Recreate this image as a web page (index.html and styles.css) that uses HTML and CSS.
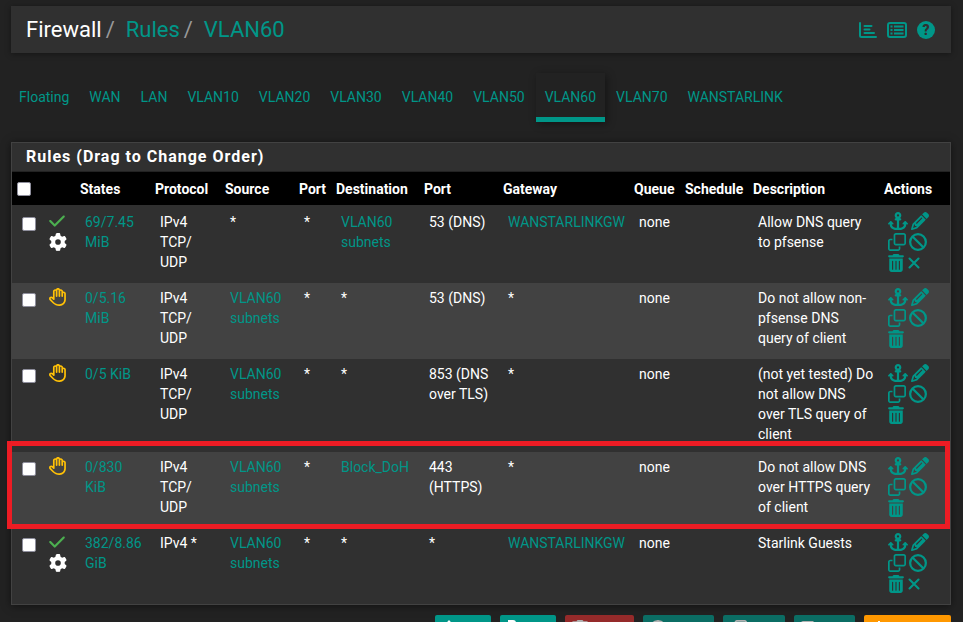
FILE: index.html
```html
<!DOCTYPE html>
<html lang="en">
<head>
    <meta charset="UTF-8">
    <meta name="viewport" content="width=device-width, initial-scale=1.0">
    <title>Firewall: Rules: VLAN60</title>
    <link rel="stylesheet" href="styles.css">
</head>
<body>
    <!-- icon set -->
    <svg class="sprite" aria-hidden="true">
        <symbol id="check" viewBox="0 0 448 512"><path d="M438.6 105.4c12.5 12.5 12.5 32.8 0 45.3l-256 256c-12.5 12.5-32.8 12.5-45.3 0l-128-128c-12.5-12.5-12.5-32.8 0-45.3s32.8-12.5 45.3 0L160 338.7 393.4 105.4c12.5-12.5 32.8-12.5 45.3 0z"/></symbol>
        <symbol id="gear" viewBox="0 0 512 512"><path d="M495.9 166.6c3.2 8.7 .5 18.4-6.4 24.6l-43.3 39.4c1.1 8.3 1.7 16.8 1.7 25.4s-.6 17.1-1.7 25.4l43.3 39.4c6.9 6.2 9.6 15.9 6.4 24.6c-4.4 11.9-9.7 23.3-15.8 34.3l-4.7 8.1c-6.6 11-14 21.4-22.1 31.2c-5.9 7.2-15.7 9.6-24.5 6.8l-55.7-17.7c-13.4 10.3-28.2 18.9-44 25.4l-12.5 57.1c-2 9.1-9 16.3-18.2 17.8c-13.8 2.3-28 3.5-42.5 3.5s-28.7-1.2-42.5-3.5c-9.2-1.5-16.2-8.7-18.2-17.8l-12.5-57.1c-15.8-6.5-30.6-15.1-44-25.4L83.1 425.9c-8.8 2.8-18.6 .3-24.5-6.8c-8.1-9.8-15.5-20.2-22.1-31.2l-4.7-8.1c-6.1-11-11.4-22.4-15.8-34.3c-3.2-8.7-.5-18.4 6.4-24.6l43.3-39.4C64.6 273.1 64 264.6 64 256s.6-17.1 1.7-25.4L22.4 191.2c-6.9-6.2-9.6-15.9-6.4-24.6c4.4-11.9 9.7-23.3 15.8-34.3l4.7-8.1c6.6-11 14-21.4 22.1-31.2c5.9-7.2 15.7-9.6 24.5-6.8l55.7 17.7c13.4-10.3 28.2-18.9 44-25.4l12.5-57.1c2-9.1 9-16.3 18.2-17.8C227.3 1.2 241.5 0 256 0s28.7 1.2 42.5 3.5c9.2 1.5 16.2 8.7 18.2 17.8l12.5 57.1c15.8 6.5 30.6 15.1 44 25.4l55.7-17.7c8.8-2.8 18.6-.3 24.5 6.8c8.1 9.8 15.5 20.2 22.1 31.2l4.7 8.1c6.1 11 11.4 22.4 15.8 34.3zM256 336a80 80 0 1 0 0-160 80 80 0 1 0 0 160z"/></symbol>
        <symbol id="hand" viewBox="0 0 512 512"><path d="M256 0c-25.3 0-47.2 14.7-57.6 36c-7-2.6-14.5-4-22.4-4c-35.3 0-64 28.7-64 64V261.5l-2.7-2.7c-25-25-65.5-25-90.5 0s-25 65.5 0 90.5L106.5 437c48 48 113.1 75 181 75H296h8c1.5 0 3-.1 4.5-.4c91.7-6.2 165-79.4 171.1-171.1c.3-1.5 .4-3 .4-4.5V160c0-35.3-28.7-64-64-64c-5.5 0-10.9 .7-16 2V96c0-35.3-28.7-64-64-64c-7.9 0-15.4 1.4-22.4 4C303.2 14.7 281.3 0 256 0zM240 96.1c0 0 0-.1 0-.1V64c0-8.8 7.2-16 16-16s16 7.2 16 16V95.9c0 0 0 .1 0 .1V232c0 13.3 10.7 24 24 24s24-10.7 24-24V96c0 0 0 0 0-.1c0-8.8 7.2-16 16-16s16 7.2 16 16v55.9c0 0 0 .1 0 .1v80c0 13.3 10.7 24 24 24s24-10.7 24-24V160.1c0 0 0-.1 0-.1c0-8.8 7.2-16 16-16s16 7.2 16 16V332.9c-.1 .6-.1 1.3-.2 1.9c-3.4 69.7-59.3 125.6-129 129c-.6 0-1.3 .1-1.9 .2H296h-8.5c-55.2 0-108.1-21.9-147.1-60.9L52.7 315.3c-6.2-6.2-6.2-16.4 0-22.6s16.4-6.2 22.6 0L119 336.4c6.9 6.9 17.2 8.9 26.2 5.2s14.8-12.5 14.8-22.2V96c0-8.8 7.2-16 16-16c8.8 0 16 7.1 16 15.9V232c0 13.3 10.7 24 24 24s24-10.7 24-24V96.1z"/></symbol>
        <symbol id="anchor" viewBox="0 0 576 512"><path d="M320 96a32 32 0 1 1 -64 0 32 32 0 1 1 64 0zm21.1 80C367 158.8 384 129.4 384 96c0-53-43-96-96-96s-96 43-96 96c0 33.4 17 62.8 42.9 80H224c-17.7 0-32 14.3-32 32s14.3 32 32 32h32V448H208c-53 0-96-43-96-96v-6.1l7 7c9.4 9.4 24.6 9.4 33.9 0s9.4-24.6 0-33.9L97 263c-9.4-9.4-24.6-9.4-33.9 0L7 319c-9.4 9.4-9.4 24.6 0 33.9s24.6 9.4 33.9 0l7-7V352c0 88.4 71.6 160 160 160h80 80c88.4 0 160-71.6 160-160v-6.1l7 7c9.4 9.4 24.6 9.4 33.9 0s9.4-24.6 0-33.9l-56-56c-9.4-9.4-24.6-9.4-33.9 0l-56 56c-9.4 9.4-9.4 24.6 0 33.9s24.6 9.4 33.9 0l7-7V352c0 53-43 96-96 96H320V240h32c17.7 0 32-14.3 32-32s-14.3-32-32-32H341.1z"/></symbol>
        <symbol id="pencil" viewBox="0 0 512 512"><path d="M410.3 231l11.3-11.3-33.9-33.9-62.1-62.1L291.7 89.8l-11.3 11.3-22.6 22.6L58.6 322.9c-10.4 10.4-18 23.3-22.2 37.4L1 480.7c-2.5 8.4-.2 17.5 6.1 23.7s15.3 8.5 23.7 6.1l120.3-35.4c14.1-4.2 27-11.8 37.4-22.2L387.7 253.7 410.3 231zM160 399.4l-9.1 22.7c-4 3.1-8.5 5.4-13.3 6.9L59.4 452l23-78.1c1.4-4.9 3.8-9.4 6.9-13.3l22.7-9.1v32c0 8.8 7.2 16 16 16h32zM362.7 18.7L348.3 33.2 325.7 55.8 314.3 67.1l33.9 33.9 62.1 62.1 33.9 33.9 11.3-11.3 22.6-22.6 14.5-14.5c25-25 25-65.5 0-90.5L453.3 18.7c-25-25-65.5-25-90.5 0zm-47.4 168l-144 144c-6.2 6.2-16.4 6.2-22.6 0s-6.2-16.4 0-22.6l144-144c6.2-6.2 16.4-6.2 22.6 0s6.2 16.4 0 22.6z"/></symbol>
        <symbol id="clone" viewBox="0 0 512 512"><path d="M64 464H288c8.800 0 16-7.200 16-16V384h48v64c0 35.300-28.700 64-64 64H64c-35.300 0-64-28.700-64-64V224c0-35.300 28.700-64 64-64h64v48H64c-8.800 0-16 7.200-16 16V448c0 8.800 7.200 16 16 16zM224 304H448c8.800 0 16-7.200 16-16V64c0-8.800-7.200-16-16-16H224c-8.800 0-16 7.200-16 16V288c0 8.800 7.200 16 16 16zm-64-16V64c0-35.300 28.700-64 64-64H448c35.300 0 64 28.700 64 64V288c0 35.300-28.700 64-64 64H224c-35.300 0-64-28.700-64-64z"/></symbol>
        <symbol id="ban" viewBox="0 0 512 512"><g fill="none" stroke="currentColor" stroke-width="64"><circle cx="256" cy="256" r="224"/><path d="M98 98l316 316"/></g></symbol>
        <symbol id="trash" viewBox="0 0 448 512"><path d="M135.2 17.7C140.6 6.8 151.7 0 163.8 0H284.2c12.100 0 23.200 6.800 28.600 17.700L320 32h96c17.700 0 32 14.300 32 32s-14.300 32-32 32H32C14.300 96 0 81.700 0 64S14.300 32 32 32h96zM32 128H416V448c0 35.300-28.700 64-64 64H96c-35.300 0-64-28.700-64-64zM128 192c-8.800 0-16 7.200-16 16V432c0 8.800 7.200 16 16 16s16-7.200 16-16V208c0-8.800-7.200-16-16-16zm96 0c-8.800 0-16 7.200-16 16V432c0 8.800 7.200 16 16 16s16-7.200 16-16V208c0-8.800-7.200-16-16-16zm96 0c-8.800 0-16 7.200-16 16V432c0 8.800 7.200 16 16 16s16-7.200 16-16V208c0-8.800-7.200-16-16-16z"/></symbol>
        <symbol id="xmark" viewBox="0 0 384 512"><path fill="none" stroke="currentColor" stroke-width="60" stroke-linecap="round" d="M64 128l256 256M320 128L64 384"/></symbol>
        <symbol id="chart" viewBox="0 0 18 18"><path fill="none" stroke="currentColor" stroke-width="2" stroke-linecap="round" stroke-linejoin="round" d="M1 2v12.500q0 1.500 1.500 1.500H17M5.500 5h7M5.500 8.500h5M5.500 12h9.500"/></symbol>
        <symbol id="list" viewBox="0 0 20 18"><g fill="none" stroke="currentColor"><rect x="1" y="2" width="18" height="14" rx="2" stroke-width="2"/><path stroke-width="2" d="M3.500 5.500h2M3.500 9h2M3.500 12.500h2M7 5.500h9.500M7 9h9.500M7 12.500h9.500"/></g></symbol>
        <symbol id="turn-up" viewBox="0 0 18 18"><path d="M8 0L2 6.500h4V15q0 3 3 3h6v-3H9V6.500h5z"/></symbol>
        <symbol id="turn-down" viewBox="0 0 18 18"><path d="M2 0h5q3 0 3 3v8.500h5L9 18l-6-6.500h4V3H2z"/></symbol>
        <symbol id="save" viewBox="0 0 18 18"><path d="M3 1h10l4 4v10q0 2-2 2H3q-2 0-2-2V3q0-2 2-2zm0 3v4h9V4zm6 6.500a2 2 0 1 0 0 4 2 2 0 1 0 0-4z" fill-rule="evenodd"/></symbol>
        <symbol id="plus" viewBox="0 0 18 18"><path d="M8 1h2v7h7v2h-7v7H8v-7H1V8h7z"/></symbol>
    </svg>

    <div class="container">
        <header class="header">
            <ol class="breadcrumb">
                <li>Firewall</li>
                <li><a href="#">Rules</a></li>
                <li><a href="#">VLAN60</a></li>
            </ol>
            <div class="context-links">
                <a href="#" aria-label="Status"><svg class="icon"><use href="#chart"/></svg></a>
                <a href="#" aria-label="Logs"><svg class="icon icon-wide"><use href="#list"/></svg></a>
                <a href="#" class="help" aria-label="Help">?</a>
            </div>
        </header>

        <nav class="tabs">
            <a href="#">Floating</a>
            <a href="#">WAN</a>
            <a href="#">LAN</a>
            <a href="#">VLAN10</a>
            <a href="#">VLAN20</a>
            <a href="#">VLAN30</a>
            <a href="#">VLAN40</a>
            <a href="#">VLAN50</a>
            <a href="#" class="active">VLAN60</a>
            <a href="#">VLAN70</a>
            <a href="#">WANSTARLINK</a>
        </nav>

        <form>
            <section class="panel">
                <h2 class="panel-title">Rules (Drag to Change Order)</h2>
                <table class="rules">
                    <colgroup>
                        <col class="col-check">
                        <col class="col-icon">
                        <col class="col-states">
                        <col class="col-protocol">
                        <col class="col-source">
                        <col class="col-sport">
                        <col class="col-dest">
                        <col class="col-dport">
                        <col class="col-gateway">
                        <col class="col-queue">
                        <col class="col-schedule">
                        <col>
                        <col class="col-actions">
                    </colgroup>
                    <thead>
                        <tr>
                            <th><input type="checkbox" aria-label="Select all"></th>
                            <th></th>
                            <th>States</th>
                            <th>Protocol</th>
                            <th>Source</th>
                            <th>Port</th>
                            <th>Destination</th>
                            <th>Port</th>
                            <th>Gateway</th>
                            <th>Queue</th>
                            <th>Schedule</th>
                            <th>Description</th>
                            <th>Actions</th>
                        </tr>
                    </thead>
                    <tbody>
                        <tr>
                            <td><input type="checkbox" aria-label="Select rule 1"></td>
                            <td>
                                <div class="status">
                                    <svg class="icon icon-trim pass"><use href="#check"/></svg>
                                    <svg class="icon"><use href="#gear"/></svg>
                                </div>
                            </td>
                            <td><a href="#">69/7.45 MiB</a></td>
                            <td>IPv4 TCP/<wbr>UDP</td>
                            <td>*</td>
                            <td>*</td>
                            <td><a href="#">VLAN60 subnets</a></td>
                            <td>53 (DNS)</td>
                            <td><a href="#">WANSTARLINKGW</a></td>
                            <td>none</td>
                            <td></td>
                            <td>Allow DNS query to pfsense</td>
                            <td>
                                <div class="actions">
                                    <a href="#" aria-label="Move"><svg class="icon icon-wide"><use href="#anchor"/></svg></a>
                                    <a href="#" aria-label="Edit"><svg class="icon"><use href="#pencil"/></svg></a>
                                    <a href="#" aria-label="Copy"><svg class="icon"><use href="#clone"/></svg></a>
                                    <a href="#" aria-label="Disable"><svg class="icon"><use href="#ban"/></svg></a>
                                    <a href="#" aria-label="Delete"><svg class="icon icon-trim"><use href="#trash"/></svg></a>
                                    <a href="#" aria-label="Kill states"><svg class="icon icon-slim"><use href="#xmark"/></svg></a>
                                </div>
                            </td>
                        </tr>
                        <tr>
                            <td><input type="checkbox" aria-label="Select rule 2"></td>
                            <td>
                                <div class="status">
                                    <svg class="icon block"><use href="#hand"/></svg>
                                </div>
                            </td>
                            <td><a href="#">0/5.16 MiB</a></td>
                            <td>IPv4 TCP/<wbr>UDP</td>
                            <td><a href="#">VLAN60 subnets</a></td>
                            <td>*</td>
                            <td>*</td>
                            <td>53 (DNS)</td>
                            <td>*</td>
                            <td>none</td>
                            <td></td>
                            <td>Do not allow non-pfsense DNS query of client</td>
                            <td>
                                <div class="actions">
                                    <a href="#" aria-label="Move"><svg class="icon icon-wide"><use href="#anchor"/></svg></a>
                                    <a href="#" aria-label="Edit"><svg class="icon"><use href="#pencil"/></svg></a>
                                    <a href="#" aria-label="Copy"><svg class="icon"><use href="#clone"/></svg></a>
                                    <a href="#" aria-label="Disable"><svg class="icon"><use href="#ban"/></svg></a>
                                    <a href="#" aria-label="Delete"><svg class="icon icon-trim"><use href="#trash"/></svg></a>
                                </div>
                            </td>
                        </tr>
                        <tr>
                            <td><input type="checkbox" aria-label="Select rule 3"></td>
                            <td>
                                <div class="status">
                                    <svg class="icon block"><use href="#hand"/></svg>
                                </div>
                            </td>
                            <td><a href="#">0/5 KiB</a></td>
                            <td>IPv4 TCP/<wbr>UDP</td>
                            <td><a href="#">VLAN60 subnets</a></td>
                            <td>*</td>
                            <td>*</td>
                            <td>853 (DNS over TLS)</td>
                            <td>*</td>
                            <td>none</td>
                            <td></td>
                            <td>(not yet tested) Do not allow DNS over TLS query of client</td>
                            <td>
                                <div class="actions">
                                    <a href="#" aria-label="Move"><svg class="icon icon-wide"><use href="#anchor"/></svg></a>
                                    <a href="#" aria-label="Edit"><svg class="icon"><use href="#pencil"/></svg></a>
                                    <a href="#" aria-label="Copy"><svg class="icon"><use href="#clone"/></svg></a>
                                    <a href="#" aria-label="Disable"><svg class="icon"><use href="#ban"/></svg></a>
                                    <a href="#" aria-label="Delete"><svg class="icon icon-trim"><use href="#trash"/></svg></a>
                                </div>
                            </td>
                        </tr>
                        <tr class="marked">
                            <td><input type="checkbox" aria-label="Select rule 4"><span class="marker"></span></td>
                            <td>
                                <div class="status">
                                    <svg class="icon block"><use href="#hand"/></svg>
                                </div>
                            </td>
                            <td><a href="#">0/830 KiB</a></td>
                            <td>IPv4 TCP/<wbr>UDP</td>
                            <td><a href="#">VLAN60 subnets</a></td>
                            <td>*</td>
                            <td><a href="#">Block_DoH</a></td>
                            <td>443 (HTTPS)</td>
                            <td>*</td>
                            <td>none</td>
                            <td></td>
                            <td>Do not allow DNS over HTTPS query of client</td>
                            <td>
                                <div class="actions">
                                    <a href="#" aria-label="Move"><svg class="icon icon-wide"><use href="#anchor"/></svg></a>
                                    <a href="#" aria-label="Edit"><svg class="icon"><use href="#pencil"/></svg></a>
                                    <a href="#" aria-label="Copy"><svg class="icon"><use href="#clone"/></svg></a>
                                    <a href="#" aria-label="Disable"><svg class="icon"><use href="#ban"/></svg></a>
                                    <a href="#" aria-label="Delete"><svg class="icon icon-trim"><use href="#trash"/></svg></a>
                                </div>
                            </td>
                        </tr>
                        <tr>
                            <td><input type="checkbox" aria-label="Select rule 5"></td>
                            <td>
                                <div class="status">
                                    <svg class="icon icon-trim pass"><use href="#check"/></svg>
                                    <svg class="icon"><use href="#gear"/></svg>
                                </div>
                            </td>
                            <td><a href="#">382/8.86 GiB</a></td>
                            <td>IPv4 *</td>
                            <td><a href="#">VLAN60 subnets</a></td>
                            <td>*</td>
                            <td>*</td>
                            <td>*</td>
                            <td><a href="#">WANSTARLINKGW</a></td>
                            <td>none</td>
                            <td></td>
                            <td>Starlink Guests</td>
                            <td>
                                <div class="actions">
                                    <a href="#" aria-label="Move"><svg class="icon icon-wide"><use href="#anchor"/></svg></a>
                                    <a href="#" aria-label="Edit"><svg class="icon"><use href="#pencil"/></svg></a>
                                    <a href="#" aria-label="Copy"><svg class="icon"><use href="#clone"/></svg></a>
                                    <a href="#" aria-label="Disable"><svg class="icon"><use href="#ban"/></svg></a>
                                    <a href="#" aria-label="Delete"><svg class="icon icon-trim"><use href="#trash"/></svg></a>
                                    <a href="#" aria-label="Kill states"><svg class="icon icon-slim"><use href="#xmark"/></svg></a>
                                </div>
                            </td>
                        </tr>
                    </tbody>
                </table>
            </section>

            <div class="buttons">
                <button type="button" class="btn"><svg class="icon"><use href="#turn-up"/></svg>Add</button>
                <button type="button" class="btn"><svg class="icon"><use href="#turn-down"/></svg>Add</button>
                <button type="button" class="btn btn-danger" disabled><svg class="icon"><use href="#trash"/></svg>Delete</button>
                <button type="button" class="btn" disabled><svg class="icon"><use href="#ban"/></svg>Toggle</button>
                <button type="button" class="btn" disabled><svg class="icon"><use href="#clone"/></svg>Copy</button>
                <button type="button" class="btn" disabled><svg class="icon"><use href="#save"/></svg>Save</button>
                <button type="button" class="btn btn-warning"><svg class="icon"><use href="#plus"/></svg>Separator</button>
            </div>
        </form>
    </div>
</body>
</html>
```
FILE: styles.css
```css
* {
    box-sizing: border-box;
}
body {
    margin: 0;
    background: #222;
    color: #fff;
    font-family: Roboto, "Liberation Sans", sans-serif;
    font-size: 14px;
    line-height: 20px;
}
a {
    color: #009688;
    text-decoration: none;
}
.sprite {
    display: none;
}
.icon {
    display: block;
    width: 18px;
    height: 18px;
    fill: currentColor;
}
.icon-wide {
    width: 20px;
}
.icon-trim {
    width: 16px;
}
.icon-slim {
    width: 14px;
}
.container {
    padding: 6px 12px 20px 11px;
}

/* page header */
.header {
    display: flex;
    align-items: center;
    justify-content: space-between;
    margin-bottom: 20px;
    padding: 8px 16px 8px 15px;
    background: #303030;
    box-shadow: 0 1px 6px rgba(0, 0, 0, 0.4);
}
.breadcrumb {
    display: flex;
    margin: 0;
    padding: 0;
    list-style: none;
    font-size: 22px;
    line-height: 31px;
}
.breadcrumb li + li::before {
    content: "/";
    padding: 0 11px 0 4px;
    color: #999;
}
.context-links {
    display: flex;
    gap: 10px;
}
.help {
    width: 18px;
    height: 18px;
    border-radius: 50%;
    background: #009688;
    color: #303030;
    font-size: 14px;
    font-weight: 900;
    line-height: 18px;
    text-align: center;
}

/* interface tabs */
.tabs {
    display: flex;
    gap: 2px;
    margin: 0 0 20px -1px;
}
.tabs a {
    padding: 14px 9px 10px;
    border-bottom: 5px solid transparent;
}
.tabs .active {
    border-bottom-color: #009688;
    box-shadow: 2px 2px 8px rgba(0, 0, 0, 0.4);
}

/* rules table */
.panel {
    border: 1px solid #424242;
    background: #303030;
    box-shadow: 0 1px 8px rgba(0, 0, 0, 0.5);
}
.panel-title {
    margin: 0;
    padding: 4px 14px;
    border-bottom: 1px solid #222;
    font-size: 16px;
    font-weight: 700;
    letter-spacing: 1px;
}
.rules {
    width: 100%;
    border-collapse: separate;
    border-spacing: 0;
    table-layout: fixed;
}
.col-check { width: 27px; }
.col-icon { width: 36px; }
.col-states { width: 75px; }
.col-protocol { width: 70px; }
.col-source { width: 74px; }
.col-sport { width: 37px; }
.col-dest { width: 88px; }
.col-dport { width: 79px; }
.col-gateway { width: 131px; }
.col-queue { width: 51px; }
.col-schedule { width: 68px; }
.col-actions { width: 71px; }
.rules th {
    padding: 7px 4px 6px 5px;
    border-bottom: 2px solid #303030;
    background: #000;
    background-clip: padding-box;
    font-weight: 700;
    text-align: left;
    white-space: nowrap;
}
.rules td {
    padding: 5px 4px 8px 10px;
    vertical-align: top;
}
.rules td:last-child {
    padding-left: 9px;
}
.rules tbody tr:nth-child(even) {
    background: #424242;
}
input[type="checkbox"] {
    appearance: none;
    display: block;
    width: 14px;
    height: 14px;
    margin: 0;
    border: 1px solid #8f8f9d;
    border-radius: 2px;
    background: #fff;
}
td input[type="checkbox"] {
    margin-top: 5px;
}
.status {
    display: flex;
    flex-direction: column;
    gap: 3px;
}
.pass {
    color: #4caf50;
}
.block {
    color: #ffc107;
}
.actions {
    display: flex;
    flex-wrap: wrap;
    gap: 3px;
    width: 48px;
    padding-bottom: 3px;
}
.marked {
    position: relative;
}
.marker {
    position: absolute;
    top: -11px;
    right: 0;
    bottom: -1px;
    left: -5px;
    border: 5px solid #ed1c24;
    pointer-events: none;
}

/* bottom buttons */
.buttons {
    display: flex;
    justify-content: flex-end;
    gap: 9px;
    margin-top: 10px;
}
.btn {
    display: flex;
    align-items: center;
    gap: 5px;
    padding: 5px 6px;
    border: 0;
    border-radius: 2px;
    background: #009688;
    color: #fff;
    font: 12px/18px Roboto, "Liberation Sans", sans-serif;
}
.btn-danger {
    background: #d32f2f;
}
.btn-warning {
    background: #ff9800;
}
.btn:disabled {
    opacity: 0.65;
}
```
